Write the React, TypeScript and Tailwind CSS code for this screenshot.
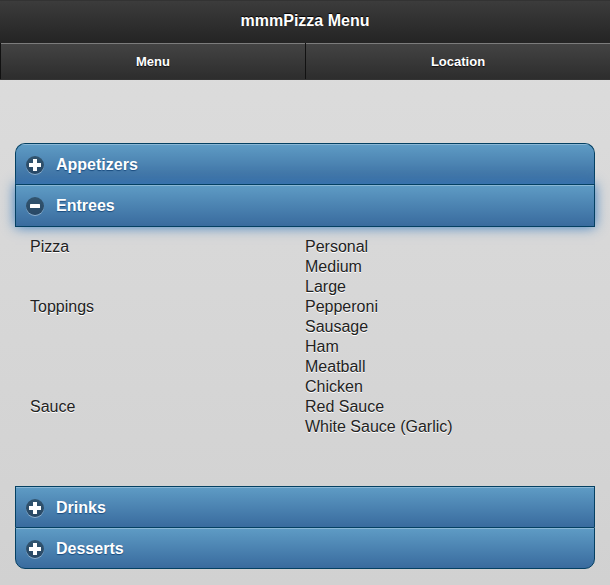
import { useState } from 'react';

interface MenuGroup {
  name: string;
  options: string[];
}

interface MenuSection {
  title: string;
  groups: MenuGroup[];
}

const sections: MenuSection[] = [
  { title: 'Appetizers', groups: [] },
  {
    title: 'Entrees',
    groups: [
      { name: 'Pizza', options: ['Personal', 'Medium', 'Large'] },
      { name: 'Toppings', options: ['Pepperoni', 'Sausage', 'Ham', 'Meatball', 'Chicken'] },
      { name: 'Sauce', options: ['Red Sauce', 'White Sauce (Garlic)'] },
    ],
  },
  { title: 'Drinks', groups: [] },
  { title: 'Desserts', groups: [] },
];

const navLinks = ['Menu', 'Location'];

function ToggleIcon({ open }: { open: boolean }) {
  return (
    <span className="flex size-[18px] items-center justify-center rounded-full bg-black/40 shadow-[0_1px_0_rgba(255,255,255,0.4)]">
      <svg viewBox="0 0 18 18" className="size-[18px]" fill="#fff" aria-hidden="true">
        {open ? (
          <rect x="4" y="7" width="10" height="4" rx="0.5" />
        ) : (
          <path d="M7 3h4v4h4v4h-4v4H7v-4H3V7h4z" />
        )}
      </svg>
    </span>
  );
}

function Header() {
  return (
    <header className="border-y border-[#333] bg-linear-to-b from-[#3c3c3c] to-[#111] font-bold text-white">
      <h1 className="pt-[9px] pb-[11px] text-center text-base leading-[22px] [text-shadow:0_-1px_1px_#000]">
        mmmPizza Menu
      </h1>
      <nav className="grid grid-cols-2">
        {navLinks.map(link => (
          <a
            key={link}
            href={`#${link.toLowerCase()}`}
            className="border-l border-[#111] bg-linear-to-b from-[#444] to-[#2d2d2d] text-center text-[13px] [text-shadow:0_1px_1px_#111]"
          >
            <span className="block border-t border-[#7c7c7c] py-[9px] leading-[17px]">{link}</span>
          </a>
        ))}
      </nav>
    </header>
  );
}

export default function App() {
  const [openTitle, setOpenTitle] = useState('Entrees');

  return (
    <div className="min-h-screen bg-linear-to-b from-[#dddddd] to-[#d1d1d1] font-['Liberation_Sans',Arial,sans-serif] text-[#222]">
      <Header />
      <main className="px-[15px] pt-[63px] pb-4">
        {sections.map(section => {
          const open = section.title === openTitle;
          return (
            <section key={section.title} className="group">
              <h2>
                <button
                  type="button"
                  aria-expanded={open}
                  onClick={() => setOpenTitle(open ? '' : section.title)}
                  className={`w-full overflow-hidden border border-[#044062] bg-linear-to-b from-[#5f9cc5] to-[#396b9e] text-left text-base font-bold text-white [text-shadow:0_1px_1px_#194b7e] group-first:rounded-t-[10px] group-last:rounded-b-[10px] ${
                    open ? 'relative pb-px shadow-[0_0_12px_#387bbe]' : 'border-b-0 group-last:border-b'
                  }`}
                >
                  <span className="flex items-center gap-3 border-t border-[#8ab7d5] px-[10px] py-[9px] leading-[21px]">
                    <ToggleIcon open={open} />
                    {section.title}
                  </span>
                </button>
              </h2>
              {open && (
                <dl className="px-[15px] pt-[10px] pb-[49px] leading-5 [text-shadow:0_1px_0_#fff]">
                  {section.groups.map(group => (
                    <div key={group.name} className="grid grid-cols-2">
                      <dt>{group.name}</dt>
                      <dd>
                        {group.options.map(option => (
                          <p key={option}>{option}</p>
                        ))}
                      </dd>
                    </div>
                  ))}
                </dl>
              )}
            </section>
          );
        })}
      </main>
    </div>
  );
}
